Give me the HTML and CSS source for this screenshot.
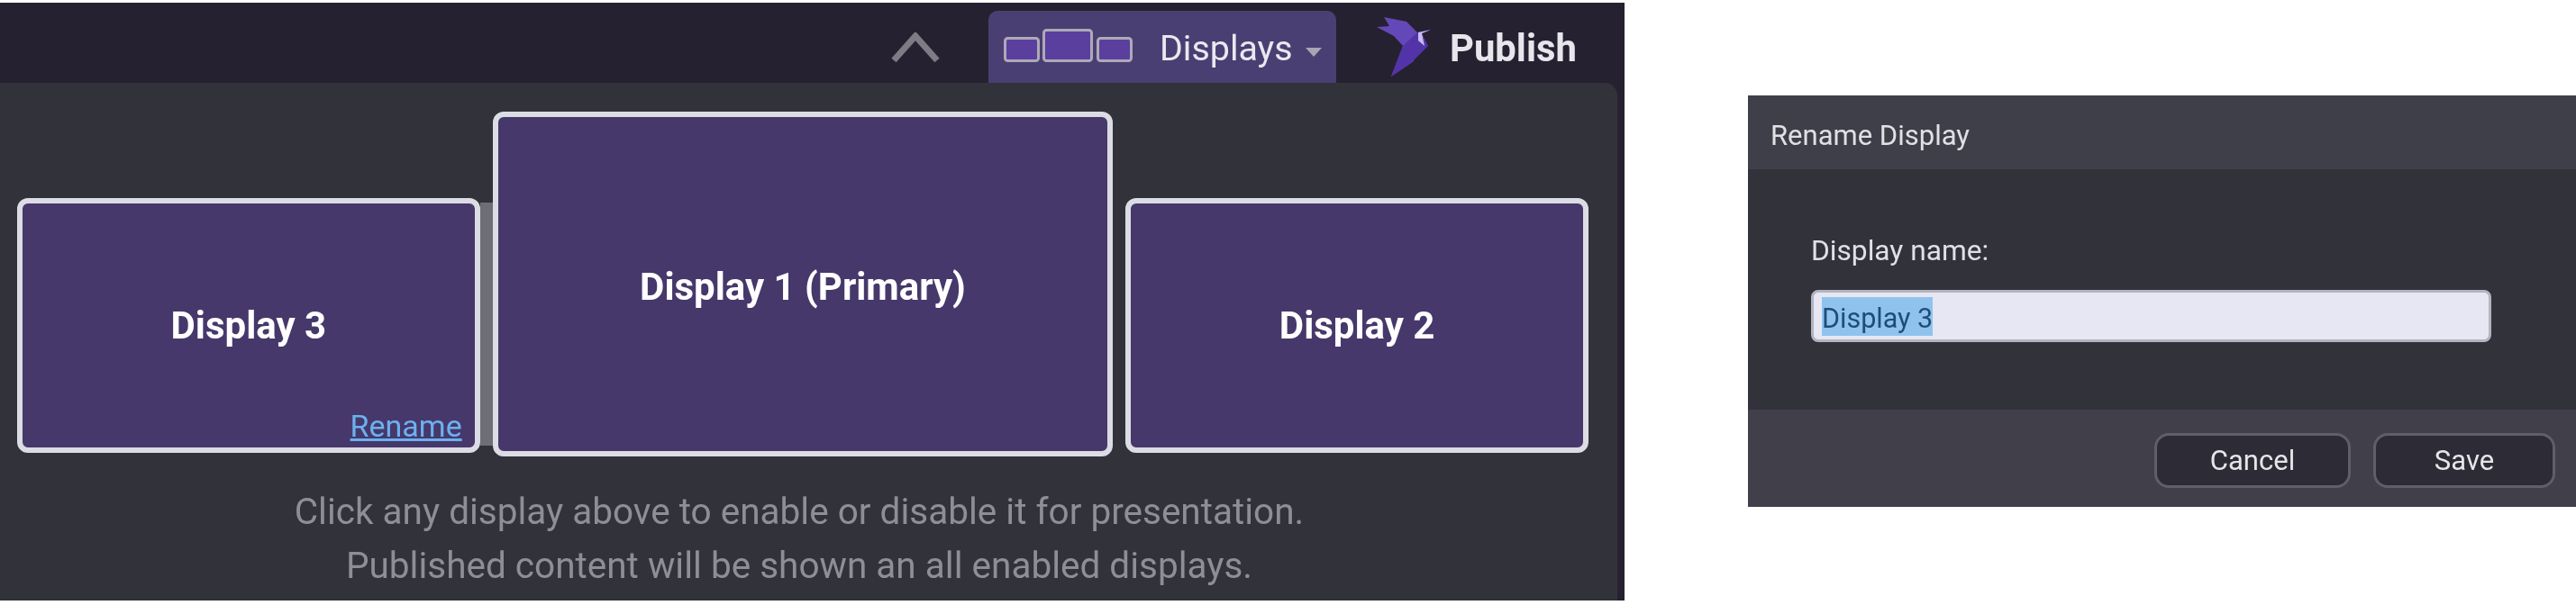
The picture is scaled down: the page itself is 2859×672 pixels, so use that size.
FILE: index.html
```html
<!DOCTYPE html>
<html lang="en">
<head>
<meta charset="utf-8">
<title>Displays</title>
<link rel="stylesheet" href="styles.css">
</head>
<body>
<main class="app">
  <header class="toolbar">
    <svg class="chevron" width="54" height="34" viewBox="0 0 54 34"><path d="M3 31 27 4l24 27" fill="none" stroke="#7d7b84" stroke-width="7"/></svg>
    <button class="displays-btn">
      <svg class="screens" width="143" height="38" viewBox="0 0 143 38">
        <rect x="1.5" y="10.5" width="37" height="25" rx="3" fill="#5a3f9e" stroke="#aea9b8" stroke-width="3"/>
        <rect x="44.5" y="1.5" width="53" height="34" rx="3" fill="#5a3f9e" stroke="#aea9b8" stroke-width="3"/>
        <rect x="104.5" y="10.5" width="37" height="25" rx="3" fill="#5a3f9e" stroke="#aea9b8" stroke-width="3"/>
      </svg>
      <span class="displays-label">Displays</span>
      <span class="caret"></span>
    </button>
    <div class="publish">
      <svg class="bird" width="62" height="68" viewBox="0 0 62 68">
        <path d="M9 1 34 6l12 12-4 32-25 17 13-34L20 22 1 12l14-1z" fill="#6448b8"/>
        <path d="M30 33 46 18l15-3-10 4 7 14-18 18-23 16z" fill="#5234a8"/>
        <path d="M47 18 61 15l-10 4 3 14-7-6z" fill="#c9bdea"/>
      </svg>
      <span class="publish-label">Publish</span>
    </div>
  </header>
  <section class="panel">
    <div class="display-row">
      <div class="display side">
        <span class="display-name">Display 3</span>
        <a class="rename" href="#">Rename</a>
      </div>
      <div class="gap-glow"></div>
      <div class="display primary">
        <span class="display-name">Display 1 (Primary)</span>
      </div>
      <div class="gap-plain"></div>
      <div class="display side">
        <span class="display-name">Display 2</span>
      </div>
    </div>
    <p class="hint">Click any display above to enable or disable it for presentation.<br>Published content will be shown an all enabled displays.</p>
  </section>
</main>
<aside class="dialog">
  <div class="dialog-title">Rename Display</div>
  <div class="dialog-body">
    <label class="field-label">Display name:</label>
    <div class="field"><span class="selected">Display 3</span></div>
  </div>
  <div class="dialog-footer">
    <button class="btn btn-cancel">Cancel</button>
    <button class="btn btn-save">Save</button>
  </div>
</aside>
</body>
</html>
```
FILE: styles.css
```css
* { box-sizing: border-box; }
html, body { margin: 0; height: 100%; background: #fff; overflow: hidden; }
body {
  display: flex;
  align-items: flex-start;
  font-family: Roboto, "Liberation Sans", sans-serif;
}
.app, .dialog { filter: blur(0.6px); }
.app {
  width: 1803px;
  height: 664px;
  margin-top: 3px;
  display: flex;
  flex-direction: column;
  background: #262130;
}
.toolbar {
  height: 89px;
  display: flex;
  align-items: flex-start;
  padding-left: 989px;
}
.chevron { margin-top: 33px; }
.displays-btn {
  width: 386px;
  height: 80px;
  margin: 9px 0 0 54px;
  padding: 20px 0 0 17px;
  display: flex;
  align-items: flex-start;
  border: 0;
  border-radius: 10px 10px 0 0;
  background: #4a3f72;
  color: #e9e8f0;
  font: inherit;
}
.displays-label {
  margin: 1px 0 0 30px;
  font-size: 39.4px;
  line-height: 42px;
}
.caret {
  margin: 21px 0 0 14px;
  border-left: 9px solid transparent;
  border-right: 9px solid transparent;
  border-top: 10px solid #a8a5b5;
}
.publish { display: flex; align-items: flex-start; margin-left: 44px; }
.bird { margin-top: 15px; }
.publish-label {
  margin: 29px 0 0 20px;
  font-size: 41.8px;
  line-height: 44px;
  font-weight: 700;
  color: #e6e6ec;
}
.panel {
  width: 1795px;
  flex: 1;
  background: #32323a;
  border-top-right-radius: 14px;
  padding: 32px 0 0 19px;
}
.display-row { display: flex; align-items: flex-end; width: 1744px; }
.display {
  position: relative;
  display: flex;
  align-items: center;
  justify-content: center;
  border: 6px solid #dcdce4;
  border-radius: 12px;
  background: #46386b;
  color: #fff;
  font-weight: 700;
}
.side { width: 514px; height: 283px; margin-bottom: 4px; }
.primary { width: 689px; height: 383px; padding-top: 7px; }
.gap-glow, .gap-plain { width: 14px; flex: none; }
.gap-glow { height: 270px; margin-bottom: 12px; background: #6e6f74; }
.display-name { font-size: 42px; line-height: 48px; }
.rename {
  position: absolute;
  right: 14px;
  bottom: 6px;
  font-size: 34px;
  line-height: 36px;
  font-weight: 400;
  color: #6cb0ee;
  text-decoration-thickness: 3px;
}
.hint {
  width: 1736px;
  margin: 31px 0 0;
  text-align: center;
  font-size: 40.5px;
  line-height: 60px;
  color: #8e8e96;
}
.dialog {
  flex: 1;
  height: 457px;
  margin: 106px 0 0 137px;
  display: flex;
  flex-direction: column;
  background: #32323b;
  color: #e0e0e5;
}
.dialog-title {
  height: 82px;
  padding: 27px 0 0 25px;
  background: #3f3f49;
  font-size: 31px;
  line-height: 36px;
}
.dialog-body { flex: 1; padding: 73px 94px 0 70px; }
.field-label { display: block; font-size: 31.7px; line-height: 36px; }
.field {
  height: 58px;
  margin-top: 25px;
  padding: 5px 0 0 9px;
  border: 3px solid #b4b4c0;
  border-radius: 8px;
  background: #e6e7f2;
}
.selected {
  display: inline-block;
  height: 43px;
  padding-top: 6px;
  background: #8fc3ee;
  color: #1f4d7a;
  font-size: 30.5px;
  line-height: 36px;
}
.dialog-footer {
  height: 108px;
  padding: 26px 23px 0 0;
  display: flex;
  justify-content: flex-end;
  align-items: flex-start;
  gap: 25px;
  background: #403f4a;
}
.btn {
  height: 61px;
  border: 3px solid #5f5e6b;
  border-radius: 16px;
  background: #2d2c36;
  color: #e6e6ea;
  font: inherit;
  font-size: 31px;
}
.btn-cancel { width: 218px; }
.btn-save { width: 202px; }
```
